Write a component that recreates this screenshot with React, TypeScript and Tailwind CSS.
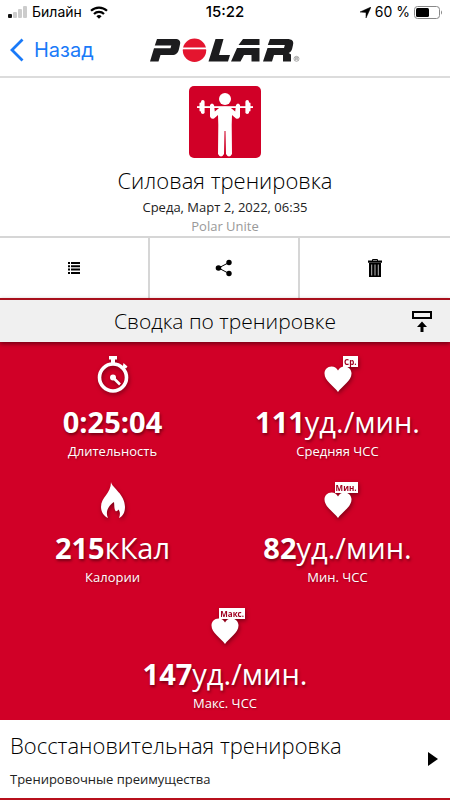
import type { ReactNode } from "react";

const SHADOW = "drop-shadow-[1px_2px_2px_rgba(60,0,10,0.55)]";

function StatusBar() {
  return (
    <div className="grid h-6 grid-cols-3 items-center px-2 font-['Inter','Liberation_Sans',sans-serif] text-sm">
      <div className="flex items-center gap-1">
        <svg width="20" height="12" viewBox="0 0 20 12" aria-hidden="true">
          <rect x="0" y="8" width="4" height="4" rx="1" fill="#111" />
          <rect x="5" y="6" width="4" height="6" rx="1" fill="#ccc" />
          <rect x="10" y="3" width="4" height="9" rx="1" fill="#ccc" />
          <rect x="15" y="0" width="4" height="12" rx="1" fill="#ccc" />
        </svg>
        <span>Билайн</span>
        <svg
          className="ml-1"
          width="18"
          height="13"
          viewBox="0 0 18 13"
          fill="none"
          stroke="#000"
          strokeWidth="2.2"
          aria-hidden="true"
        >
          <path d="M1 4.8a11.5 11.5 0 0 1 16 0" />
          <path d="M4 8a7 7 0 0 1 10 0" />
          <path d="M6.4 10.2a3.8 3.8 0 0 1 5.2 0L9 12.8Z" fill="#000" stroke="none" />
        </svg>
      </div>
      <div className="text-center text-[15px] font-medium">15:22</div>
      <div className="flex items-center justify-end gap-1">
        <svg width="11" height="11" viewBox="0 0 11 11" aria-hidden="true">
          <path d="M11 0 6 11V5.5L0 5Z" stroke="#000" strokeWidth="0.5" />
        </svg>
        <span className="whitespace-nowrap">60 %</span>
        <svg width="28" height="13" viewBox="0 0 28 13" aria-hidden="true">
          <rect x="0.5" y="0.5" width="25" height="12" rx="3" fill="none" stroke="#888" />
          <rect x="2" y="2" width="13" height="9" rx="1.5" />
          <path d="M27 4.5c1.3.7 1.3 3.3 0 4Z" fill="#888" />
        </svg>
      </div>
    </div>
  );
}

function PolarLogo() {
  return (
    <svg width="150" height="24" viewBox="0 0 150 24" role="img" aria-label="Polar">
      <g fill="#1c1c1e">
        <path d="M7 1h18c4 0 6 2 5 5.5l-1 4.5c-1 4-3 6-7 6H10.5L8.5 23.5H0L4 10.300h16.5l.8-2.8H4.8Z" />
        <path d="M65.5 1h8L69 17h11l-2 6.5H58.5Z" />
        <path d="M93 1h16.5v6H88.5ZM87 10h22.5v13.5h-8V17h-7.5l-3.5 6.5H81Z" />
        <path d="M120 1h17c5 0 7 2 6 6l-.8 3.5c-.6 2.3-1.5 3.5-3.5 4.5l2.3 1.5v7h-8V17h-9l-2 6.5h-9L117.5 10h16.5l.8-3h-17Z" />
      </g>
      <circle cx="44.5" cy="12.3" r="11.7" fill="#e4152f" />
      <path d="M32 9.5h25v1.8H32Z" fill="#fff" />
      <g fill="none" stroke="#777" strokeWidth="0.6">
        <circle cx="146.5" cy="20.8" r="2.5" />
        <path d="M145.7 22.3v-3h1.2a.8.8 0 0 1 0 1.6h-1.2m1.2 0 .8 1.4" />
      </g>
    </svg>
  );
}

function StrengthIcon() {
  return (
    <svg className="shrink-0" width="72" height="72" viewBox="0 0 72 72" aria-hidden="true">
      <rect width="72" height="72" rx="5" fill="#d10027" />
      <g fill="#fff">
        <circle cx="36" cy="13" r="6" />
        <rect x="8" y="20.2" width="56" height="1.8" />
        <rect x="10.5" y="16.5" width="2" height="9" rx="1" />
        <rect x="12" y="14" width="3.6" height="14" rx="1.8" />
        <rect x="56.4" y="14" width="3.6" height="14" rx="1.8" />
        <rect x="59.5" y="16.5" width="2" height="9" rx="1" />
        <path d="M21 19q2-3 4 0l.8 6.5L31 21.2q5-1 10 0l5.2 4.300L47 19q2-3 4 0v11.5q-1 3-4 2L43 29l-.3 10 .3 29q-3 5-6 0l-.5-23h-1L35 68q-3 5-6 0l.3-29L29 29l-4 3.500q-3 1-4-2Z" />
      </g>
    </svg>
  );
}

function ListIcon() {
  return (
    <svg width="12" height="12" viewBox="0 0 12 12" aria-hidden="true">
      <path d="M0 0h2v2H0zM3 0h9v2H3zM0 3.3h2v2H0zM3 3.3h9v2H3zM0 6.6h2v2H0zM3 6.6h9v2H3zM0 10h2v2H0zM3 10h9v2H3z" />
    </svg>
  );
}

function ShareIcon() {
  return (
    <svg width="18" height="18" viewBox="0 0 18 18" aria-hidden="true">
      <path d="M14 3.5 3.5 9 14 14.5" fill="none" stroke="#000" strokeWidth="1" />
      <circle cx="3.5" cy="9" r="2.8" />
      <circle cx="14" cy="3.5" r="2.7" />
      <circle cx="14" cy="14.5" r="2.7" />
    </svg>
  );
}

function TrashIcon() {
  return (
    <svg width="14" height="20" viewBox="0 0 14 20" aria-hidden="true">
      <path d="M4.5 3V1.5h5V3" fill="none" stroke="#000" />
      <path d="M0 2.5h14v2.3H0zM1 5h12v14H1z" />
      <path d="M3.7 6.5v11M7 6.5v11M10.3 6.5v11" stroke="#bbb" strokeWidth="1" />
    </svg>
  );
}

function CollapseIcon() {
  return (
    <svg width="20" height="21" viewBox="0 0 20 21" aria-hidden="true">
      <rect x="1" y="1" width="18" height="6" fill="none" stroke="#000" strokeWidth="2" />
      <path d="M10 10.5 15 16h-3.5v5h-3v-5H5Z" />
    </svg>
  );
}

function StopwatchIcon() {
  return (
    <svg className={SHADOW} width="32" height="37" viewBox="0 0 32 37" aria-hidden="true">
      <circle cx="16" cy="21.5" r="13.5" fill="none" stroke="#fff" strokeWidth="3.6" />
      <path d="M12 0h8v3.5h-2V8h-4V3.5h-2ZM26.5 7l4 3.5-1.5 2-1-.5-2 2-2.5-2 2.5-2.5Z" fill="#fff" />
      <circle cx="16" cy="21.5" r="3" fill="#fff" />
      <path d="m16 21.5 7 7" stroke="#fff" strokeWidth="2.6" />
    </svg>
  );
}

function FlameIcon() {
  return (
    <svg className={SHADOW} width="26" height="37" viewBox="0 0 26 37" aria-hidden="true">
      <path
        d="M11 0c1 6 14 12 14 25 0 5-2 9-6 11 1.5-4 1-6.5-.5-8.5-1 1.5-2 2-3 1.5-1.5-2-1-5-1.5-9C8.5 23.5 5 30 8 36c-4-2-7-6-7-11C1 15 11 12 11 0Z"
        fill="#fff"
      />
    </svg>
  );
}

function HeartIcon({ tag }: { tag: string }) {
  return (
    <span className={`relative flex h-9 items-end ${SHADOW}`}>
      <svg width="28" height="26" viewBox="0 0 28 26" aria-hidden="true">
        <path
          d="M14 26C10 20 .5 15 .5 7.5.5 3.500 3.500.5 7.5.5c3 0 5 1.5 6.5 4 1.500-2.500 3.500-4 6.500-4 4 0 7 3 7 7C27.500 15 18 20 14 26Z"
          fill="#fff"
        />
      </svg>
      <span className="absolute -right-1.5 top-0 bg-white px-px text-[8px] leading-[11px] font-bold text-[#a00020]">
        {tag}
      </span>
    </span>
  );
}

type StatProps = {
  icon: ReactNode;
  value: string;
  unit?: string;
  label: string;
  wide?: boolean;
};

function Stat({ icon, value, unit, label, wide }: StatProps) {
  return (
    <div className={`flex h-[126px] flex-col items-center pt-3.5 ${wide ? "col-span-2" : ""}`}>
      <div className="flex h-[38px] items-start">{icon}</div>
      <p className="mt-2 text-[29px] leading-10 whitespace-nowrap [text-shadow:1px_2px_3px_rgba(60,0,10,0.6)]">
        <strong className="font-bold">{value}</strong>
        {unit}
      </p>
      <p className="text-[13px] leading-[18px] [text-shadow:1px_1px_2px_rgba(60,0,10,0.4)]">{label}</p>
    </div>
  );
}

export default function App() {
  return (
    <div className="min-h-screen bg-white font-['Open_Sans','Noto_Sans',sans-serif] text-black">
      <StatusBar />
      <header className="grid h-[54px] grid-cols-[1fr_auto_1fr] items-center border-b-2 border-[#dcdcdc] px-2.5">
        <a
          href="#back"
          className="flex items-center gap-2.5 font-['Inter','Liberation_Sans',sans-serif] text-xl text-[#1a7af8]"
        >
          <svg width="14" height="24" viewBox="0 0 14 24" fill="none" aria-hidden="true">
            <path d="M12.5 1.5 2 12l10.5 10.5" stroke="currentColor" strokeWidth="2.8" />
          </svg>
          Назад
        </a>
        <PolarLogo />
      </header>

      <main>
        <section className="flex h-[158px] flex-col items-center pt-2">
          <StrengthIcon />
          <h1 className="mt-1.5 text-[22px] leading-8 font-light">Силовая тренировка</h1>
          <p className="mt-0.5 text-[13px] leading-[18px] text-[#222]">Среда, Март 2, 2022, 06:35</p>
          <p className="text-[13px] leading-5 text-[#999]">Polar Unite</p>
        </section>

        <div className="grid h-[62px] grid-cols-3 divide-x-2 divide-[#d6d6d6] border-t-2 border-[#d6d6d6]">
          <button type="button" aria-label="Список" className="flex items-center justify-center">
            <ListIcon />
          </button>
          <button type="button" aria-label="Поделиться" className="flex items-center justify-center">
            <ShareIcon />
          </button>
          <button type="button" aria-label="Удалить" className="flex items-center justify-center">
            <TrashIcon />
          </button>
        </div>

        <div className="relative grid h-11 grid-cols-[1fr_auto_1fr] items-center border-t-2 border-[#a8101c] bg-[#f0f0f0] px-[18px] shadow-[0_2px_4px_rgba(60,0,10,0.6)]">
          <h2 className="col-start-2 text-[21px] leading-8 font-light">Сводка по тренировке</h2>
          <button type="button" aria-label="Свернуть" className="justify-self-end">
            <CollapseIcon />
          </button>
        </div>

        <section className="grid grid-cols-2 bg-[#d10027] text-white">
          <Stat icon={<StopwatchIcon />} value="0:25:04" label="Длительность" />
          <Stat icon={<HeartIcon tag="Ср." />} value="111" unit="уд./мин." label="Средняя ЧСС" />
          <Stat icon={<FlameIcon />} value="215" unit="кКал" label="Калории" />
          <Stat icon={<HeartIcon tag="Мин." />} value="82" unit="уд./мин." label="Мин. ЧСС" />
          <Stat icon={<HeartIcon tag="Макс." />} value="147" unit="уд./мин." label="Макс. ЧСС" wide />
        </section>

        <a
          href="#benefit"
          className="flex h-20 items-center justify-between border-b-2 border-[#b8101c] px-2.5"
        >
          <div>
            <h2 className="text-[22px] leading-8 font-light">Восстановительная тренировка</h2>
            <p className="mt-2 text-[13px] leading-5 text-[#222]">Тренировочные преимущества</p>
          </div>
          <svg className="mr-0.5" width="10" height="14" viewBox="0 0 10 14" aria-hidden="true">
            <path d="M0 0 10 7 0 14Z" />
          </svg>
        </a>
      </main>
    </div>
  );
}
